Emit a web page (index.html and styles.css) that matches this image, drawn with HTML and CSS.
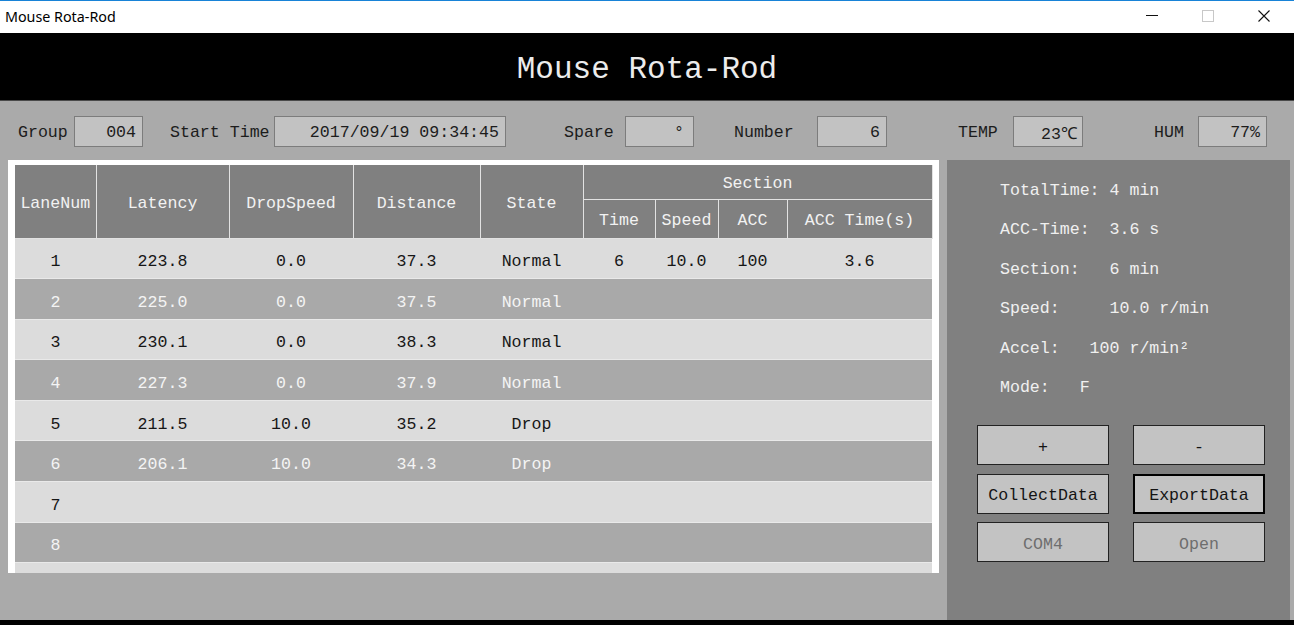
FILE: index.html
```html
<!DOCTYPE html>
<html lang="en">
<head>
<meta charset="utf-8">
<title>Mouse Rota-Rod</title>
<link rel="stylesheet" href="styles.css">
</head>
<body>
<div class="window">
  <header class="titlebar">
    <span class="titlebar__text">Mouse Rota-Rod</span>
    <div class="titlebar__controls">
      <span class="ctl">
        <svg width="12" height="12" viewBox="0 0 12 12"><path d="M0 5.5H12" stroke="#111" stroke-width="1"/></svg>
      </span>
      <span class="ctl">
        <svg width="12" height="12" viewBox="0 0 12 12"><rect x="0.5" y="0.5" width="11" height="11" fill="none" stroke="#c8c8c8" stroke-width="1"/></svg>
      </span>
      <span class="ctl">
        <svg width="12" height="12" viewBox="0 0 12 12"><path d="M0.5 0.5L11.5 11.5M11.5 0.5L0.5 11.5" stroke="#111" stroke-width="1.1"/></svg>
      </span>
    </div>
  </header>

  <div class="banner">
    <h1 class="banner__title">Mouse Rota-Rod</h1>
  </div>

  <main class="app">
    <div class="info">
      <div class="field field--group"><span class="field__label">Group</span><span class="field__box">004</span></div>
      <div class="field field--start"><span class="field__label">Start Time</span><span class="field__box">2017/09/19 09:34:45</span></div>
      <div class="field field--spare"><span class="field__label">Spare</span><span class="field__box">°</span></div>
      <div class="field field--number"><span class="field__label">Number</span><span class="field__box">6</span></div>
      <div class="field field--temp"><span class="field__label">TEMP</span><span class="field__box">23℃</span></div>
      <div class="field field--hum"><span class="field__label">HUM</span><span class="field__box">77%</span></div>
    </div>

    <div class="work">
      <div class="grid-frame">
        <table class="lanes">
          <colgroup>
            <col class="c-lane"><col class="c-lat"><col class="c-drop"><col class="c-dist"><col class="c-state">
            <col class="c-time"><col class="c-speed"><col class="c-acc"><col class="c-acct">
          </colgroup>
          <thead>
            <tr class="head-1">
              <th rowspan="2">LaneNum</th>
              <th rowspan="2">Latency</th>
              <th rowspan="2">DropSpeed</th>
              <th rowspan="2">Distance</th>
              <th rowspan="2">State</th>
              <th colspan="4">Section</th>
            </tr>
            <tr class="head-2">
              <th>Time</th>
              <th>Speed</th>
              <th>ACC</th>
              <th>ACC Time(s)</th>
            </tr>
          </thead>
          <tbody>
            <tr class="row row--light"><td>1</td><td>223.8</td><td>0.0</td><td>37.3</td><td>Normal</td><td>6</td><td>10.0</td><td>100</td><td>3.6</td></tr>
            <tr class="row row--dark"><td>2</td><td>225.0</td><td>0.0</td><td>37.5</td><td>Normal</td><td></td><td></td><td></td><td></td></tr>
            <tr class="row row--light"><td>3</td><td>230.1</td><td>0.0</td><td>38.3</td><td>Normal</td><td></td><td></td><td></td><td></td></tr>
            <tr class="row row--dark"><td>4</td><td>227.3</td><td>0.0</td><td>37.9</td><td>Normal</td><td></td><td></td><td></td><td></td></tr>
            <tr class="row row--light"><td>5</td><td>211.5</td><td>10.0</td><td>35.2</td><td>Drop</td><td></td><td></td><td></td><td></td></tr>
            <tr class="row row--dark"><td>6</td><td>206.1</td><td>10.0</td><td>34.3</td><td>Drop</td><td></td><td></td><td></td><td></td></tr>
            <tr class="row row--light"><td>7</td><td></td><td></td><td></td><td></td><td></td><td></td><td></td><td></td></tr>
            <tr class="row row--dark"><td>8</td><td></td><td></td><td></td><td></td><td></td><td></td><td></td><td></td></tr>
            <tr class="row row--light"><td></td><td></td><td></td><td></td><td></td><td></td><td></td><td></td><td></td></tr>
          </tbody>
        </table>
      </div>

      <aside class="panel">
        <ul class="stats">
          <li>TotalTime: 4 min</li>
          <li>ACC-Time:  3.6 s</li>
          <li>Section:   6 min</li>
          <li>Speed:     10.0 r/min</li>
          <li>Accel:   100 r/min²</li>
          <li>Mode:   F</li>
        </ul>
        <div class="buttons">
          <button class="btn">+</button>
          <button class="btn">-</button>
          <button class="btn">CollectData</button>
          <button class="btn btn--focus">ExportData</button>
          <button class="btn btn--disabled">COM4</button>
          <button class="btn btn--disabled">Open</button>
        </div>
      </aside>
    </div>
  </main>
  <div class="bottom-edge"></div>
</div>
</body>
</html>
```
FILE: styles.css
```css
* {
  box-sizing: border-box;
}

html, body {
  margin: 0;
  padding: 0;
}

body {
  width: 1294px;
  height: 625px;
  overflow: hidden;
  background: #aaaaaa;
  font-family: "Liberation Mono", "DejaVu Sans Mono", monospace;
  font-size: 16.6px;
}

.window {
  display: flex;
  flex-direction: column;
  height: 625px;
}

/* ---------- window title bar ---------- */
.titlebar {
  height: 33px;
  flex: none;
  background: #ffffff;
  border-top: 1px solid #1883d7;
  display: flex;
  align-items: center;
  justify-content: space-between;
}

.titlebar__text {
  font-family: "Noto Sans", "Open Sans", sans-serif;
  font-size: 14.3px;
  color: #000;
  padding-left: 5px;
  margin-top: -1px;
}

.titlebar__controls {
  display: flex;
  padding-right: 2px;
  height: 100%;
}

.ctl {
  width: 56px;
  display: flex;
  align-items: center;
  justify-content: center;
  padding-bottom: 2px;
}

.ctl svg {
  display: block;
}

/* ---------- black banner ---------- */
.banner {
  height: 68px;
  flex: none;
  background: #000;
  border-bottom: 1px solid #4a4a4a;
  display: flex;
  align-items: center;
  justify-content: center;
}

.banner__title {
  margin: 0;
  font-weight: normal;
  font-size: 31px;
  color: #ececec;
  padding-top: 6px;
}

/* ---------- app body ---------- */
.app {
  height: 519px;
  flex: none;
  background: #aaaaaa;
  display: flex;
  flex-direction: column;
}

.info {
  height: 59px;
  flex: none;
  display: flex;
  align-items: center;
  padding-left: 18px;
  padding-top: 2px;
  color: #1c1c1c;
}

.field {
  display: flex;
  align-items: center;
  justify-content: space-between;
}

.field__label {
  padding-top: 1px;
}

.field__box {
  height: 31px;
  background: #c2c2c2;
  border: 1px solid #7c7c7c;
  display: flex;
  align-items: center;
  justify-content: flex-end;
  padding-right: 6px;
  padding-top: 1px;
  color: #1c1c1c;
}

.field--group { width: 125px; }
.field--group .field__box { width: 69px; }

.field--start { width: 336px; margin-left: 27px; }
.field--start .field__box { width: 232px; }

.field--spare { width: 130px; margin-left: 58px; }
.field--spare .field__box { width: 69px; padding-right: 9px; }

.field--number { width: 153px; margin-left: 40px; }
.field--number .field__box { width: 70px; }

.field--temp { width: 125px; margin-left: 71px; }
.field--temp .field__box { width: 70px; padding-right: 4px; }

.field--hum { width: 113px; margin-left: 71px; }
.field--hum .field__box { width: 69px; }

.work {
  flex: 1;
  display: flex;
  align-items: flex-start;
  padding-left: 8px;
}

/* ---------- lane table ---------- */
.grid-frame {
  width: 931px;
  height: 413px;
  flex: none;
  background: #ffffff;
  padding: 5px 7px 0 7px;
  overflow: hidden;
}

.lanes {
  width: 917px;
  table-layout: fixed;
  border-collapse: collapse;
  border-spacing: 0;
}

.c-lane { width: 81px; }
.c-lat { width: 133px; }
.c-drop { width: 124px; }
.c-dist { width: 127px; }
.c-state { width: 103px; }
.c-time { width: 72px; }
.c-speed { width: 63px; }
.c-acc { width: 69px; }
.c-acct { width: 145px; }

.lanes th {
  background: #808080;
  color: #f2f2f2;
  font-weight: normal;
  border: 1px solid #e2e2e2;
  padding: 4px 0 0 0;
  text-align: center;
  white-space: nowrap;
}

.lanes thead tr:first-child th {
  border-top: none;
}

.lanes th:first-child {
  border-left: none;
}

.head-1 {
  height: 34px;
}

.head-2 {
  height: 39px;
}

.head-2 th {
  padding-top: 3px;
}

.lanes td {
  padding: 7px 0 0 0;
  text-align: center;
  white-space: nowrap;
}

.row {
  height: 40.6px;
  border-top: 1px solid #e9e9e9;
}

.row--light {
  background: #dcdcdc;
  color: #161616;
}

.row--dark {
  background: #a9a9a9;
  color: #f4f4f4;
}

/* ---------- right control panel ---------- */
.panel {
  width: 343px;
  height: 460px;
  flex: none;
  margin-left: 8px;
  background: #808080;
  padding: 11px 0 0 30px;
}

.stats {
  list-style: none;
  margin: 0;
  padding: 0 0 0 23px;
  color: #f0f0f0;
}

.stats li {
  height: 39.4px;
  line-height: 39.4px;
  white-space: pre;
}

.buttons {
  margin-top: 18px;
  display: grid;
  grid-template-columns: 132px 132px;
  column-gap: 24px;
  row-gap: 8.5px;
}

.btn {
  height: 40px;
  font-family: inherit;
  font-size: 16.6px;
  background: #c3c3c3;
  border: 1px solid #222222;
  color: #141414;
  padding: 4px 0 0 0;
  margin: 0;
  border-radius: 0;
}

.btn--focus {
  border: 2px solid #000;
}

.btn--disabled {
  color: #6e6e6e;
}

.bottom-edge {
  height: 5px;
  flex: none;
  background: #000;
}
```
